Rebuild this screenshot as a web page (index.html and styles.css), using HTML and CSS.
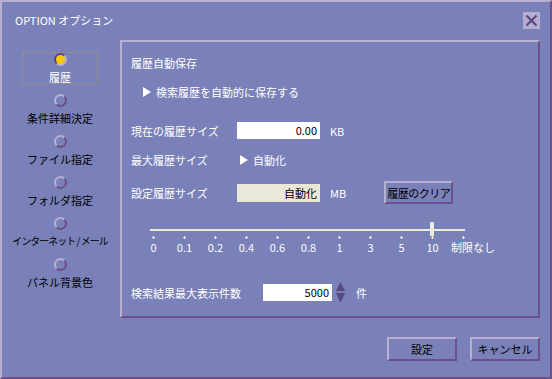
FILE: index.html
```html
<!DOCTYPE html>
<html lang="ja">
<head>
  <meta charset="UTF-8">
  <title>OPTION オプション</title>
  <link rel="stylesheet" href="styles.css">
</head>
<body>
  <div class="window">
    <div class="titlebar">
      <span class="title">OPTION オプション</span>
      <span class="close">
        <svg width="13" height="13" viewBox="0 0 13 13"><path d="M1.5 1.5 L11.5 11.5 M11.5 1.5 L1.5 11.5" stroke="#5a4880" stroke-width="2.2"/></svg>
      </span>
    </div>

    <div class="main">
      <ul class="sidebar">
        <li class="item selected"><span class="radio on"></span><span class="label">履歴</span></li>
        <li class="item"><span class="radio"></span><span class="label">条件詳細決定</span></li>
        <li class="item"><span class="radio"></span><span class="label">ファイル指定</span></li>
        <li class="item"><span class="radio"></span><span class="label">フォルダ指定</span></li>
        <li class="item"><span class="radio"></span><span class="label narrow">インターネット / メール</span></li>
        <li class="item"><span class="radio"></span><span class="label">パネル背景色</span></li>
      </ul>

      <div class="panel">
        <div class="row heading">履歴自動保存</div>
        <div class="row option">
          <svg class="arrow" width="8" height="10" viewBox="0 0 8 10"><path d="M0 0 L8 5 L0 10 Z" fill="#fff"/></svg>
          検索履歴を自動的に保存する
        </div>

        <div class="row field first">
          <span class="name">現在の履歴サイズ</span>
          <span class="box">0.00</span>
          <span class="unit">KB</span>
        </div>

        <div class="row field plain">
          <span class="name">最大履歴サイズ</span>
          <span class="auto">
            <svg class="arrow" width="8" height="10" viewBox="0 0 8 10"><path d="M0 0 L8 5 L0 10 Z" fill="#fff"/></svg>
            自動化
          </span>
        </div>

        <div class="row field setsize">
          <span class="name">設定履歴サイズ</span>
          <span class="box beige">自動化</span>
          <span class="unit">MB</span>
          <button class="btn clear">履歴のクリア</button>
        </div>

        <div class="slider">
          <div class="track"></div>
          <div class="thumb"></div>
          <div class="ticks">
            <span>0</span><span>0.1</span><span>0.2</span><span>0.4</span><span>0.6</span><span>0.8</span>
            <span>1</span><span>3</span><span>5</span><span>10</span><span class="last">制限なし</span>
          </div>
        </div>

        <div class="row field results">
          <span class="name wide">検索結果最大表示件数</span>
          <span class="box num">5000</span>
          <svg class="spin" width="9" height="21" viewBox="0 0 9 21"><path d="M4.5 0 L9 9 L0 9 Z M0 11 L9 11 L4.5 21 Z" fill="#5a4880"/></svg>
          <span class="unit">件</span>
        </div>
      </div>
    </div>

    <div class="footer">
      <button class="btn action">設定</button>
      <button class="btn action">キャンセル</button>
    </div>
  </div>
</body>
</html>
```

FILE: styles.css
```css
body {
  margin: 0;
  font-family: "Noto Sans CJK JP", "DejaVu Sans", sans-serif;
  font-size: 11px;
  background-color: #7a80b8;
}
.window {
  width: 552px;
  height: 379px;
  box-sizing: border-box;
  background-color: #7a80b8;
  border-top: 2px solid #b8b0d0;
  border-left: 2px solid #b8b0d0;
  border-right: 2px solid #6c5088;
  border-bottom: 2px solid #6c5088;
  color: #fff;
}
.titlebar {
  height: 36px;
  display: flex;
  align-items: center;
  justify-content: space-between;
  padding: 0 10px 0 13px;
}
.title {
  line-height: 12px;
}
.close {
  width: 17px;
  height: 17px;
  margin-top: 1px;
  background-color: #b4aed0;
  display: flex;
  align-items: center;
  justify-content: center;
}
.main {
  display: flex;
  margin-top: 2px;
}
.sidebar {
  list-style: none;
  margin: 0;
  padding: 12px 0 0 20px;
  width: 98px;
}
.item {
  width: 76px;
  height: 32px;
  box-sizing: border-box;
  margin-bottom: 9px;
  border: 1px dotted transparent;
  display: flex;
  flex-direction: column;
  align-items: center;
  color: #000;
}
.item.selected {
  border-color: #a8985a;
  color: #fff;
}
.radio {
  width: 13px;
  height: 13px;
  box-sizing: border-box;
  border-radius: 50%;
  border: 2px solid #b8b0d0;
  border-right-color: #6c5088;
  border-bottom-color: #6c5088;
  margin-left: 1px;
}
.radio.on {
  background-color: #f8c800;
  border-color: #5a4880 #b8b0d0 #b8b0d0 #5a4880;
}
.label {
  margin-top: 5px;
  line-height: 12px;
  white-space: nowrap;
}
.label.narrow {
  font-size: 10px;
  letter-spacing: -1px;
}
.panel {
  width: 420px;
  height: 278px;
  box-sizing: border-box;
  border-top: 2px solid #b8b0d0;
  border-left: 2px solid #b8b0d0;
  border-right: 2px solid #6c5088;
  border-bottom: 2px solid #6c5088;
  padding-left: 9px;
}
.row {
  display: flex;
  align-items: center;
  line-height: 14px;
}
.heading {
  margin-top: 14px;
}
.option {
  margin-top: 15px;
  padding-left: 12px;
}
.arrow {
  margin-right: 5px;
}
.field.first {
  margin-top: 23px;
  height: 17px;
}
.field.plain {
  margin-top: 14px;
}
.field.setsize {
  margin-top: 14px;
  height: 23px;
}
.name {
  width: 106px;
}
.name.wide {
  width: 132px;
}
.box {
  width: 83px;
  height: 17px;
  box-sizing: border-box;
  background-color: #fff;
  color: #000;
  text-align: right;
  padding-right: 3px;
  line-height: 17px;
}
.box.beige {
  height: 18px;
  background-color: #eae8d8;
  line-height: 18px;
}
.box.num {
  width: 69px;
}
.unit {
  margin-left: 10px;
}
.auto {
  display: flex;
  align-items: center;
  margin-left: 3px;
}
.btn {
  font-family: inherit;
  font-size: 11px;
  color: #000;
  background-color: #7a80b8;
  border: 2px solid;
  border-color: #b8b0d0 #6c5088 #6c5088 #b8b0d0;
  padding: 0;
  height: 23px;
  white-space: nowrap;
  cursor: pointer;
}
.btn.clear {
  width: 69px;
  margin-left: 38px;
  letter-spacing: -0.5px;
}
.slider {
  position: relative;
  margin: 18px 0 0 7px;
  width: 341px;
  height: 32px;
}
.track {
  position: absolute;
  left: 12px;
  top: 7px;
  width: 315px;
  height: 2px;
  background-color: #eceadc;
}
.thumb {
  position: absolute;
  left: 292px;
  top: 0;
  width: 4px;
  height: 14px;
  background-color: #eceadc;
}
.ticks {
  display: flex;
  padding-top: 14px;
}
.ticks span {
  width: 31px;
  flex: none;
  text-align: center;
  position: relative;
  padding-top: 6px;
  line-height: 11px;
  white-space: nowrap;
}
.ticks span::before {
  content: "";
  position: absolute;
  top: 1px;
  left: 14px;
  width: 3px;
  height: 1px;
  background-color: #eceadc;
}
.ticks span::after {
  content: "";
  position: absolute;
  top: 0;
  left: 15px;
  width: 1px;
  height: 3px;
  background-color: #eceadc;
}
.ticks span.last {
  text-align: left;
  text-indent: 3px;
}
.field.results {
  margin-top: 28px;
  height: 21px;
}
.spin {
  margin-left: 4px;
}
.results .unit {
  margin-left: 11px;
}
.footer {
  display: flex;
  justify-content: flex-end;
  gap: 13px;
  padding: 19px 10px 0 0;
}
.btn.action {
  width: 70px;
  height: 24px;
}
```
